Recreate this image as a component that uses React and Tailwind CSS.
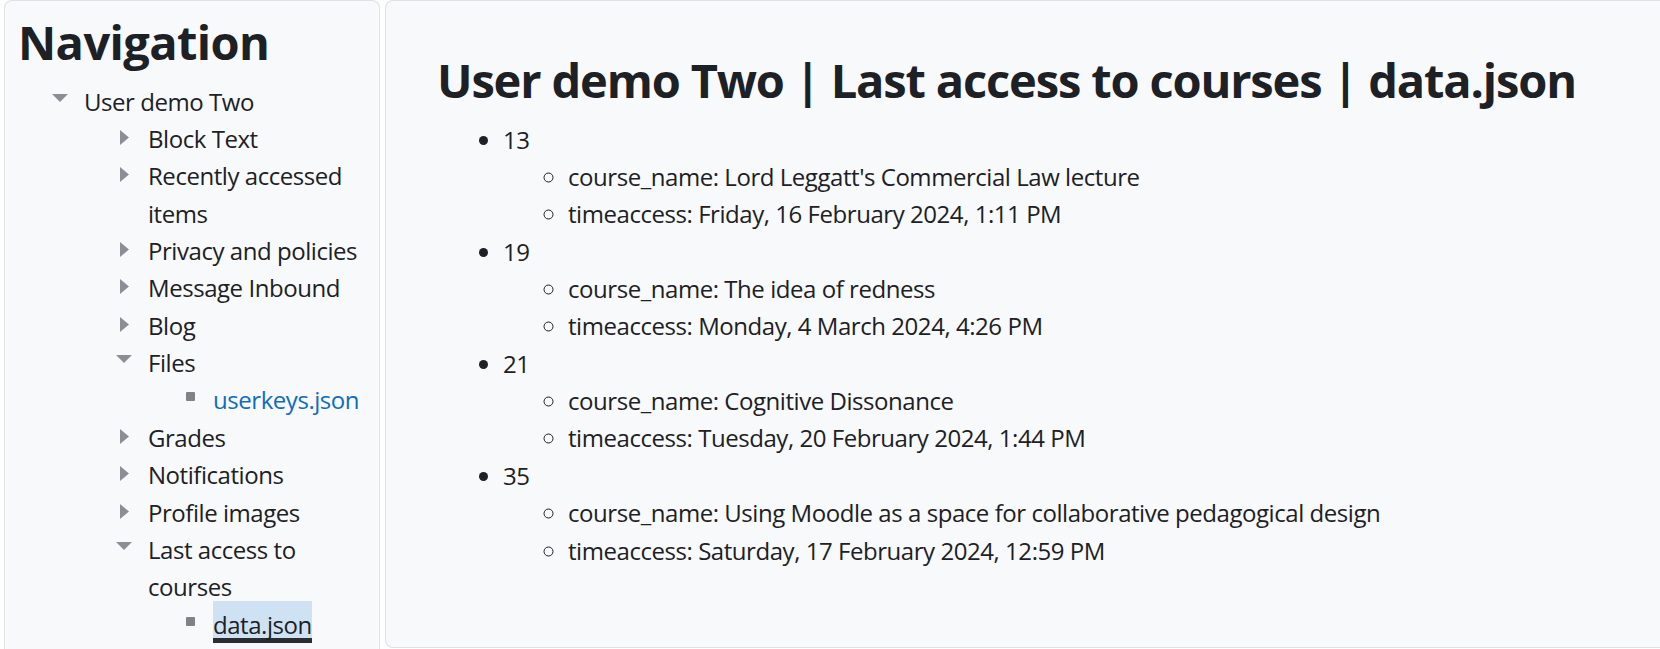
import React from "react";

const navItems = [
  { label: "User demo Two", level: 1, icon: "down" },
  { label: "Block Text", level: 2, icon: "right" },
  { label: "Recently accessed items", level: 2, icon: "right" },
  { label: "Privacy and policies", level: 2, icon: "right" },
  { label: "Message Inbound", level: 2, icon: "right" },
  { label: "Blog", level: 2, icon: "right" },
  { label: "Files", level: 2, icon: "down" },
  { label: "userkeys.json", level: 3, icon: "square", link: true },
  { label: "Grades", level: 2, icon: "right" },
  { label: "Notifications", level: 2, icon: "right" },
  { label: "Profile images", level: 2, icon: "right" },
  { label: "Last access to courses", level: 2, icon: "down" },
  { label: "data.json", level: 3, icon: "square", active: true },
  { label: "Subscriptions", level: 2, icon: "right" },
];

const courses = [
  {
    id: "13",
    name: "Lord Leggatt's Commercial Law lecture",
    time: "Friday, 16 February 2024, 1:11 PM",
  },
  {
    id: "19",
    name: "The idea of redness",
    time: "Monday, 4 March 2024, 4:26 PM",
  },
  {
    id: "21",
    name: "Cognitive Dissonance",
    time: "Tuesday, 20 February 2024, 1:44 PM",
  },
  {
    id: "35",
    name: "Using Moodle as a space for collaborative pedagogical design",
    time: "Saturday, 17 February 2024, 12:59 PM",
  },
];

function TreeIcon({ type }) {
  if (type === "down") {
    return (
      <svg width="16" height="8" viewBox="0 0 16 8" className="mt-[11px]">
        <polygon points="0,0 16,0 8,8" fill="#8a8f96" />
      </svg>
    );
  }
  if (type === "right") {
    return (
      <svg width="9" height="15" viewBox="0 0 9 15" className="mt-[10px] ml-[4px]">
        <polygon points="0,0 9,7.5 0,15" fill="#8a8f96" />
      </svg>
    );
  }
  return <span className="mt-[11px] ml-[5px] block h-[9px] w-[9px] rounded-[1px] bg-[#808285]" />;
}

const indent = {
  1: "pl-[47px]",
  2: "pl-[111px]",
  3: "pl-[176px]",
};

function NavRow({ item }) {
  return (
    <li className={`flex ${indent[item.level]}`}>
      <span className="flex w-[20px] shrink-0 mr-[12px] justify-start">
        <TreeIcon type={item.icon} />
      </span>
      {item.link ? (
        <a className="text-[#0f6cbf]">{item.label}</a>
      ) : item.active ? (
        <span>
          <span className="inline-block -mt-[5px] bg-[#cfe2f4] border-b-[5px] border-[#2b2d31] pt-[10px] leading-[27px]">
            {item.label}
          </span>
        </span>
      ) : (
        <span>{item.label}</span>
      )}
    </li>
  );
}

export default function App() {
  return (
    <div
      className="flex h-[649px] overflow-hidden bg-white pl-[4px] text-[#1d2125]"
      style={{ fontFamily: '"Open Sans", "Noto Sans", sans-serif' }}
    >
      <aside className="w-[376px] shrink-0 h-[700px] rounded-t-lg border border-b-0 border-[#dee2e6] bg-[#f8f9fa] pt-[13px] pr-[14px]">
        <h2 className="pl-[13px] text-[47px] font-bold leading-[57.6px] tracking-[-0.6px] mb-[11px]">
          Navigation
        </h2>
        <ul className="text-[24px] leading-[37.36px] tracking-[-0.45px]">
          {navItems.map((item) => (
            <NavRow key={item.label} item={item} />
          ))}
        </ul>
      </aside>

      <main className="ml-[5px] flex-1 h-[648px] rounded-l-lg border border-r-0 border-[#dee2e6] bg-[#f8f9fa] pt-[51px] pl-[51px]">
        <h2 className="text-[47px] font-bold leading-[57.6px] tracking-[-1.15px] mb-[11px]">
          User demo Two | Last access to courses | data.json
        </h2>
        <ul className="list-disc pl-[66px] text-[24px] leading-[37.36px] tracking-[-0.45px]">
          {courses.map((c) => (
            <li key={c.id}>
              {c.id}
              <ul className="list-[circle] pl-[65px]">
                <li>course_name: {c.name}</li>
                <li>timeaccess: {c.time}</li>
              </ul>
            </li>
          ))}
        </ul>
      </main>
    </div>
  );
}
